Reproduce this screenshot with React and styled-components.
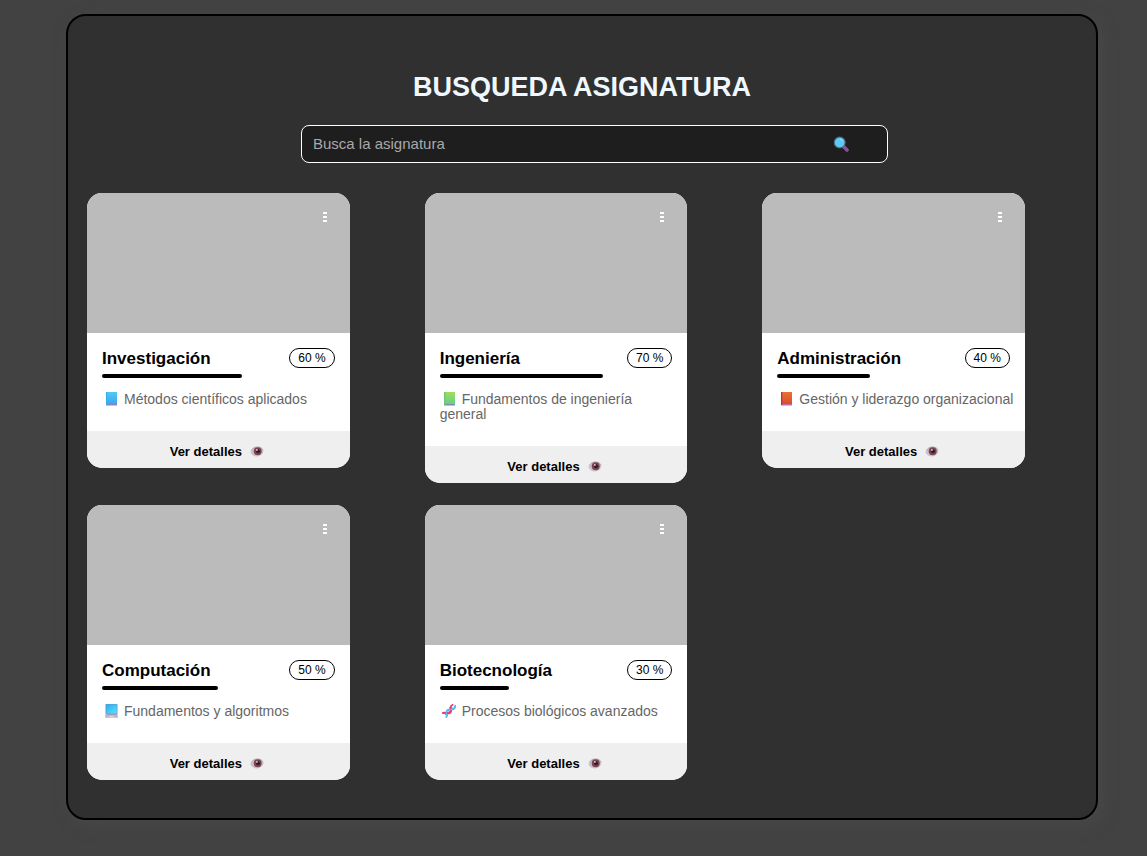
import React from "react";
import styled, { createGlobalStyle } from "styled-components";

const GlobalStyle = createGlobalStyle`
  *, *::before, *::after { box-sizing: border-box; }
  body {
    margin: 0;
    background: #424242;
    font-family: "Liberation Sans", Arial, Helvetica, sans-serif;
  }
  button, input { font-family: inherit; }
`;

const Page = styled.div`
  padding: 14px 49px 36px 66px;
`;

const Panel = styled.main`
  padding: 56px 0 38px;
  background: #303030;
  border: 2px solid #000;
  border-radius: 20px;
  box-shadow: 5px 5px 15px #484848;
`;

const Heading = styled.h1`
  margin: 0 0 22px;
  font-size: 27px;
  line-height: 31px;
  text-align: center;
  color: aliceblue;
`;

const SearchForm = styled.form`
  display: flex;
  align-items: center;
  height: 38px;
  margin: 0 208px 30px 233px;
  padding: 0 38px 0 11px;
  background: #1e1e1e;
  border: 1px solid #fff;
  border-radius: 8px;
`;

const SearchInput = styled.input`
  flex: 1;
  min-width: 0;
  padding: 0;
  border: 0;
  outline: 0;
  background: transparent;
  color: #fff;
  font-size: 15px;
  line-height: 18px;
  &::placeholder { color: #a9a9a9; opacity: 1; }
`;

const IconButton = styled.button`
  display: flex;
  padding: 0;
  border: 0;
  background: transparent;
  cursor: pointer;
`;

const CardGrid = styled.section`
  display: grid;
  grid-template-columns: repeat(3, minmax(0, 1fr));
  align-items: start;
  gap: 22px 75px;
  padding: 0 71px 0 19px;
`;

const Card = styled.article`
  overflow: hidden;
  background: #fff;
  border-radius: 15px;
`;

const Cover = styled.div`
  display: flex;
  justify-content: flex-end;
  align-items: flex-start;
  height: 140px;
  padding: 16px 20px;
  background: #bbb;
`;

const CardBody = styled.div`
  padding: 15px 15px 24px;
`;

const TitleRow = styled.div`
  display: flex;
  align-items: center;
  justify-content: space-between;
  height: 20px;
`;

const CardTitle = styled.h2`
  margin: 0;
  font-size: 17px;
  line-height: 22px;
  padding-top: 2px;
  color: #000;
`;

const Badge = styled.span`
  padding: 0 8px;
  border: 1px solid #000;
  border-radius: 10px;
  font-size: 12px;
  line-height: 18px;
  color: #000;
`;

const Progress = styled.div`
  height: 4px;
  margin: 6px 0 14px;
`;

const ProgressFill = styled.div`
  height: 100%;
  border-radius: 2px;
  background: #000;
`;

const Description = styled.p`
  margin: 0 -5px 0 0;
  font-size: 14px;
  line-height: 15px;
  color: #666;
  svg { margin: 0 6px 0 2px; vertical-align: -2px; }
`;

const DetailsButton = styled.button`
  display: flex;
  align-items: center;
  justify-content: center;
  gap: 8px;
  width: 100%;
  height: 37px;
  padding: 3px 3px 0 0;
  border: 0;
  background: #efefef;
  color: #000;
  font-size: 13px;
  font-weight: bold;
  line-height: 15px;
  cursor: pointer;
`;

const SearchIcon = () => (
  <svg width="16" height="16" viewBox="0 0 16 16" aria-hidden="true">
    <path d="M10.500 10.500l3.500 3.500" stroke="#8b4f96" strokeWidth="3.600" strokeLinecap="round" />
    <circle cx="6.700" cy="6.500" r="5.400" fill="#5dcaf2" stroke="#4d6b91" strokeWidth="1.100" />
    <path d="M7.500 3.300l1.600 1" stroke="#a8e8fc" strokeWidth="1" strokeLinecap="round" />
  </svg>
);

const DotsIcon = () => (
  <svg width="8" height="18" viewBox="0 0 8 18" fill="#fff" aria-hidden="true">
    <rect x="1" y="3" width="4" height="2" />
    <rect x="1" y="7" width="4" height="2" />
    <rect x="1" y="11" width="4" height="2" />
  </svg>
);

const EyeIcon = () => (
  <svg width="14" height="12" viewBox="0 0 14 12" aria-hidden="true">
    <path d="M.4 7.300C1.600 3.700 4 2 7.300 2s5.400 1.500 6.300 4.300C12.300 9.500 10.200 11.500 7 11.500S1.700 10.100.4 7.300z" fill="#cdc2cb" />
    <path d="M1.300 5.500C3 2.700 5.200 2 7.400 2c2.900 0 4.700 1 5.700 3.100" fill="none" stroke="#a996a6" strokeWidth=".8" />
    <circle cx="7.700" cy="6.300" r="4" fill="#7a4750" />
    <circle cx="8" cy="6.300" r="2" fill="#321c27" />
    <circle cx="6.900" cy="4.900" r=".9" fill="#e5d7dd" />
  </svg>
);

const bookColors = {
  blue: ["#50c9f5", "#3ca6ed", "#3cabea", "#8a80ce"],
  green: ["#a4dc58", "#66cf8d", "#70c474", "#7c8eae"],
  red: ["#e97332", "#dc4c2d", "#b73442", "#c36ca5"],
};

const BookIcon = ({ color }) => {
  const [top, bottom, spine, pages] = bookColors[color];
  const id = `cover-${color}`;
  return (
    <svg width="14" height="14" viewBox="0 0 14 14" aria-hidden="true">
      <defs>
        <linearGradient id={id} x2="0" y2="1">
          <stop stopColor={top} />
          <stop offset="1" stopColor={bottom} />
        </linearGradient>
      </defs>
      <path d="M2 1h11v12.500H2z" fill={pages} />
      <path d="M2 0h11v12H2z" fill={`url(#${id})`} />
      <path d="M2 0h1.300v13H2z" fill={spine} />
    </svg>
  );
};

const LaptopIcon = () => (
  <svg width="14" height="14" viewBox="0 0 14 14" aria-hidden="true">
    <defs>
      <linearGradient id="screen" x2="1" y2="1">
        <stop stopColor="#2eaaf2" />
        <stop offset="1" stopColor="#58e2fc" />
      </linearGradient>
    </defs>
    <rect x="1.500" y="0" width="12" height="10" rx=".8" fill="#5e9bc4" />
    <path d="M2.300.6h10.400v8.400H2.300z" fill="url(#screen)" />
    <path d="M1.500 9.500h12l.5 4.200H1z" fill="#bab6cb" />
    <path d="M2.500 10h10l.3 1H2.200z" fill="#a29eb6" />
    <path d="M5.500 12h4v1h-4z" fill="#dedbe8" />
  </svg>
);

const DnaIcon = () => (
  <svg width="14" height="14" viewBox="0 0 14 14" fill="none" strokeLinecap="round" aria-hidden="true">
    <path d="M2.500 9l2.700 2.500M8.500 3l3 2.500M6 6l2.500 2.500" stroke="#8b78cf" strokeWidth="1.300" />
    <path d="M1 9c2.200-1.200 4 .8 6 .2 2.600-.8 2.200-3.700 1.400-5.200" stroke="#e73d70" strokeWidth="2" />
    <path d="M4.300 13C6 10.800 4 8.800 4.800 7c.9-2 3.400-1.500 5-1.700C12.500 5 13.200 3.300 13.200 1.800" stroke="#59b8f2" strokeWidth="1.900" />
    <path d="M8.400 4c0-1.500 1-2.800 2.300-3.300M5.500 8.800c1.500.8 3 .2 3.400-1.300" stroke="#e73d70" strokeWidth="1.600" />
  </svg>
);

const subjects = [
  { name: "Investigación", percent: 60, text: "Métodos científicos aplicados", icon: <BookIcon color="blue" /> },
  { name: "Ingeniería", percent: 70, text: "Fundamentos de ingeniería general", icon: <BookIcon color="green" /> },
  { name: "Administración", percent: 40, text: "Gestión y liderazgo organizacional", icon: <BookIcon color="red" /> },
  { name: "Computación", percent: 50, text: "Fundamentos y algoritmos", icon: <LaptopIcon /> },
  { name: "Biotecnología", percent: 30, text: "Procesos biológicos avanzados", icon: <DnaIcon /> },
];

function SubjectCard({ name, percent, text, icon }) {
  return (
    <Card>
      <Cover>
        <IconButton type="button" aria-label={`Opciones de ${name}`}>
          <DotsIcon />
        </IconButton>
      </Cover>
      <CardBody>
        <TitleRow>
          <CardTitle>{name}</CardTitle>
          <Badge>{percent} %</Badge>
        </TitleRow>
        <Progress>
          <ProgressFill style={{ width: `${percent}%` }} />
        </Progress>
        <Description>{icon}{text}</Description>
      </CardBody>
      <DetailsButton type="button">
        Ver detalles
        <EyeIcon />
      </DetailsButton>
    </Card>
  );
}

export default function App() {
  return (
    <>
      <GlobalStyle />
      <Page>
        <Panel>
          <Heading>BUSQUEDA ASIGNATURA</Heading>
          <SearchForm role="search" onSubmit={(event) => event.preventDefault()}>
            <SearchInput type="text" placeholder="Busca la asignatura" aria-label="Busca la asignatura" />
            <IconButton type="submit" aria-label="Buscar">
              <SearchIcon />
            </IconButton>
          </SearchForm>
          <CardGrid>
            {subjects.map((subject) => (
              <SubjectCard key={subject.name} {...subject} />
            ))}
          </CardGrid>
        </Panel>
      </Page>
    </>
  );
}
